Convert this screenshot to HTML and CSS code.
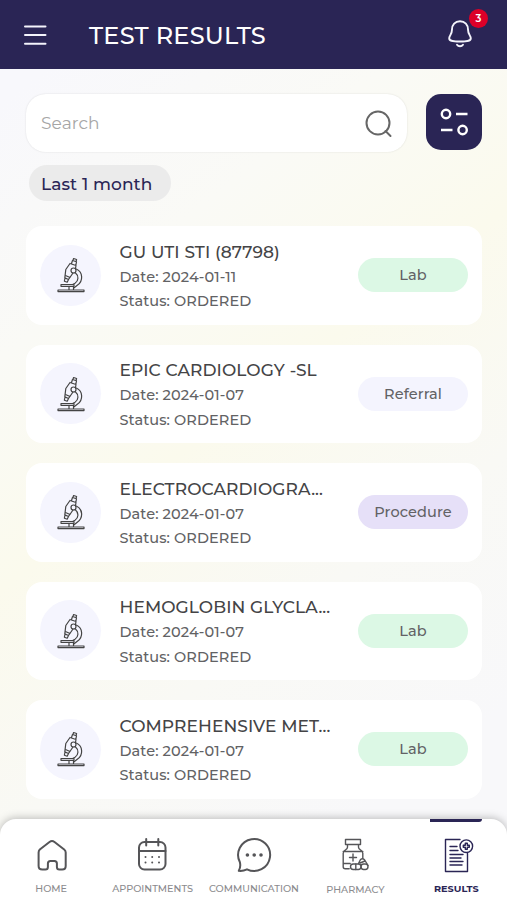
FILE: index.html
```html
<!DOCTYPE html>
<html lang="en">
<head>
    <meta charset="UTF-8">
    <meta name="viewport" content="width=device-width, initial-scale=1.0">
    <title>Test Results</title>
    <link rel="stylesheet" href="styles.css">
</head>
<body>
    <svg class="sprite" aria-hidden="true">
        <symbol id="microscope" viewBox="0 0 28 36">
            <path d="M1 33h26v1.6H1zM4 27.5h13v1.8H4zM12 29.3v3.7M16.500 29.300v3.700"/>
            <path d="M13 6.500l6 2-.5 3M16 16l-4.500 6.500-3.700-1.600 1-8.400 4.200-6M14.500 6.500l1-3 4 1.300-.7 3.500M16 3.300l.6-1.800 3 1-.5 1.800M8.500 18.500l4.500 2M8 21l-.6 3.200 2.800 1 1.300-2.700"/>
            <circle cx="16.500" cy="13.500" r="2.500"/>
            <path d="M19.300 12c6.700 3 7.200 12 1 16.300L16.800 31M18.300 15.800c3.700 3 3.400 8-.3 10.400l-2.300 1.300"/>
        </symbol>
    </svg>

    <header class="header">
        <button class="icon-button" aria-label="Menu">
            <svg width="24" height="24" viewBox="0 0 24 24"><path d="M2 3.500h20.500M2 12h20.500M2 20.700h20.500"/></svg>
        </button>
        <h1>TEST RESULTS</h1>
        <button class="icon-button bell" aria-label="Notifications">
            <svg width="26" height="30" viewBox="0 0 26 30">
                <path d="M13 2.200c-5 0-8 3.600-8 8.200 0 5-2.800 6.300-2.800 8.800 0 2.500 2.500 3.300 10.800 3.300s10.800-.8 10.800-3.300c0-2.500-2.800-3.800-2.800-8.800 0-4.600-3-8.200-8-8.200zM10 25.800c1.400 2 4.600 2 6 0"/>
            </svg>
            <span class="count">3</span>
        </button>
    </header>

    <main class="content">
        <div class="search-row">
            <div class="search-box">
                <span>Search</span>
                <svg width="28" height="28" viewBox="0 0 28 28"><circle cx="13" cy="13" r="11.5"/><path d="M20.5 21l5 5"/></svg>
            </div>
            <button class="filter-button" aria-label="Filter">
                <svg width="28" height="28" viewBox="0 0 28 28"><circle cx="6" cy="6" r="4.2"/><path d="M16 6h11.500M1 22h11.500"/><circle cx="22.6" cy="22" r="4.2"/></svg>
            </button>
        </div>

        <div class="chip">Last 1 month</div>

        <div class="results">
            <div class="card">
                <div class="avatar"><svg width="28" height="36"><use href="#microscope"/></svg></div>
                <div class="info">
                    <h2>GU UTI STI (87798)</h2>
                    <p>Date: 2024-01-11</p>
                    <p>Status: ORDERED</p>
                </div>
                <span class="tag lab">Lab</span>
            </div>
            <div class="card">
                <div class="avatar"><svg width="28" height="36"><use href="#microscope"/></svg></div>
                <div class="info">
                    <h2>EPIC CARDIOLOGY -SL</h2>
                    <p>Date: 2024-01-07</p>
                    <p>Status: ORDERED</p>
                </div>
                <span class="tag referral">Referral</span>
            </div>
            <div class="card">
                <div class="avatar"><svg width="28" height="36"><use href="#microscope"/></svg></div>
                <div class="info">
                    <h2>ELECTROCARDIOGRA...</h2>
                    <p>Date: 2024-01-07</p>
                    <p>Status: ORDERED</p>
                </div>
                <span class="tag procedure">Procedure</span>
            </div>
            <div class="card">
                <div class="avatar"><svg width="28" height="36"><use href="#microscope"/></svg></div>
                <div class="info">
                    <h2>HEMOGLOBIN GLYCLA...</h2>
                    <p>Date: 2024-01-07</p>
                    <p>Status: ORDERED</p>
                </div>
                <span class="tag lab">Lab</span>
            </div>
            <div class="card">
                <div class="avatar"><svg width="28" height="36"><use href="#microscope"/></svg></div>
                <div class="info">
                    <h2>COMPREHENSIVE MET...</h2>
                    <p>Date: 2024-01-07</p>
                    <p>Status: ORDERED</p>
                </div>
                <span class="tag lab">Lab</span>
            </div>
        </div>
    </main>

    <nav class="tabs">
        <a class="tab">
            <svg width="36" height="36" viewBox="0 0 36 36"><path d="M5.800 12.500L15.500 5q2.500-1.800 5 0l9.700 7.500q1.500 1.200 1.500 3V29q0 3.500-3.500 3.500h-2.800q-2.500 0-2.500-2.500v-3.500q0-2.500-2.500-2.500h-4q-2.500 0-2.500 2.500V30q0 2.500-2.500 2.500H8.300Q4.600 32.500 4.600 29V15.500q0-1.800 1.200-3z"/></svg>
            <span>HOME</span>
        </a>
        <a class="tab appointments">
            <svg width="36" height="36" viewBox="0 0 36 36"><rect x="5" y="5" width="26.5" height="27.5" rx="5.5"/><path d="M5 14h26.500M12.200 2v6.500M24.300 2v6.500"/><path class="dots" d="M11.500 20h.01M18.200 20h.01M25 20h.01M11.500 25.500h.01M18.200 25.500h.01M25 25.500h.01"/></svg>
            <span>APPOINTMENTS</span>
        </a>
        <a class="tab communication">
            <svg width="36" height="36" viewBox="0 0 36 36"><path d="M3.900 25.300A16 16 0 1 1 11 32.300Q7 34.300 2.800 33.800q2.200-3.800 1.100-8.500z"/><path class="dots" d="M11.400 18h.01M18.200 18h.01M25 18h.01"/></svg>
            <span>COMMUNICATION</span>
        </a>
        <a class="tab pharmacy">
            <svg width="36" height="36" viewBox="0 0 36 36">
                <path d="M9.500 2.500h15v5h-15zM11.500 7.500v2.800q0 1.500-2 2.500-2.300 1-2.300 3.500v13.500q0 2 2 2h4M22.500 7.500v2.800q0 1.500 2 2.500 2.300 1 2.300 3.500V21M7.200 14.500h19.600M7.200 26.500h7M17 17v7M13.500 20.500h7"/>
                <rect x="14.5" y="27" width="10.5" height="5.5" rx="2.7"/><path d="M19.800 27v5.500M22.500 26.500l2-4q2.200-1.600 4.200.5l3.300 5.500M24 26l5-2"/><rect x="25" y="27" width="7" height="5.5" rx="2.7"/>
            </svg>
            <span>PHARMACY</span>
        </a>
        <a class="tab active">
            <svg width="36" height="36" viewBox="0 0 36 36"><path d="M21 2.500H6.500v32h22V16.500M11 9.500h7M11 13.500h8M11 17.500h13M11 21h11M11 24.500h13M11 28h12"/><circle cx="27.300" cy="9.200" r="6.300"/><path d="M26.300 6.200h2v2h2v2h-2v2h-2v-2h-2v-2h2z"/></svg>
            <span>RESULTS</span>
        </a>
    </nav>
</body>
</html>
```
FILE: styles.css
```css
* {
    box-sizing: border-box;
}

body {
    margin: 0;
    height: 900px;
    display: flex;
    flex-direction: column;
    overflow: hidden;
    font-family: 'Montserrat', 'Inter', sans-serif;
    color: #4a4a4c;
    background: linear-gradient(143deg, #f8f8fc 8%, #fafaf6 28%, #fbfaed 46%, #f9f9f5 65%, #f8f8fa 85%);
}

h1, h2, p {
    margin: 0;
    font-weight: 500;
}

button {
    border: none;
    padding: 0;
    background: none;
}

svg {
    display: block;
    fill: none;
    stroke: currentColor;
    stroke-width: 2;
    stroke-linecap: round;
    stroke-linejoin: round;
}

.sprite {
    display: none;
}

.header {
    height: 69px;
    flex: none;
    display: flex;
    align-items: center;
    padding: 0 34px 0 23px;
    background: #2a2555;
    color: #fff;
}

.header h1 {
    flex: 1;
    margin-left: 42px;
    padding-top: 1px;
    font-size: 24px;
    letter-spacing: 0.25px;
    white-space: nowrap;
}

.icon-button {
    position: relative;
    color: #f4f4fc;
}

.bell svg {
    margin-bottom: 2px;
    stroke-width: 1.9;
}

.count {
    position: absolute;
    top: -10px;
    right: -15px;
    width: 19px;
    height: 19px;
    border-radius: 50%;
    background: #dc0028;
    color: #fff;
    font-family: 'Montserrat', 'Inter', sans-serif;
    font-size: 10px;
    font-weight: 600;
    line-height: 19px;
    text-align: center;
}

.content {
    flex: 1;
    padding: 25px 25px 0 26px;
}

.search-row {
    display: flex;
    align-items: flex-start;
    gap: 19px;
}

.search-box {
    flex: 1;
    height: 58px;
    display: flex;
    align-items: center;
    justify-content: space-between;
    padding: 0 14px 0 15px;
    border-radius: 20px;
    background: #fff;
    box-shadow: 0 0 2px rgba(0, 0, 0, 0.12);
    color: #a6a6a6;
    font-size: 17px;
    letter-spacing: 0.1px;
}

.search-box svg {
    color: #666;
    margin-top: 2px;
}

.filter-button {
    width: 56px;
    height: 56px;
    display: flex;
    align-items: center;
    justify-content: center;
    border-radius: 15px;
    background: #2a2555;
    color: #fff;
}

.filter-button svg {
    stroke-width: 2.4;
    stroke-linecap: butt;
}

.chip {
    width: 142px;
    height: 36px;
    margin: 13px 0 0 3px;
    padding-left: 12px;
    border-radius: 18px;
    background: #ebebeb;
    color: #2a2555;
    font-size: 17px;
    font-weight: 500;
    line-height: 38px;
    letter-spacing: 0.1px;
}

.results {
    display: flex;
    flex-direction: column;
    gap: 20px;
    margin-top: 25px;
}

.card {
    height: 98.5px;
    display: flex;
    align-items: center;
    padding: 0 14px;
    border-radius: 16px;
    background: #fff;
}

.avatar {
    width: 61px;
    height: 61px;
    display: flex;
    align-items: center;
    justify-content: center;
    border-radius: 50%;
    background: #f5f5fe;
    color: #444;
}

.avatar svg {
    stroke-width: 1.2;
}

.info {
    flex: 1;
    margin-left: 18.5px;
    padding-top: 3px;
    font-size: 14.5px;
    line-height: 24.5px;
    letter-spacing: 0.1px;
    white-space: nowrap;
    color: #626264;
}

.info h2 {
    font-size: 17px;
    line-height: 25px;
    color: #444446;
}

.tag {
    width: 110px;
    height: 34px;
    border-radius: 17px;
    color: #626265;
    font-size: 14.5px;
    font-weight: 500;
    line-height: 35px;
    letter-spacing: 0.1px;
    text-align: center;
}

.lab {
    background: #dcf8e5;
}

.referral {
    background: #f4f4fe;
}

.procedure {
    background: #e6e0f8;
}

.tabs {
    height: 81px;
    flex: none;
    display: flex;
    border-radius: 16px 16px 0 0;
    background: #fff;
    box-shadow: 0 -1px 8px rgba(0, 0, 0, 0.25);
}

.tab {
    position: relative;
    flex: 1;
    min-width: 0;
    display: flex;
    flex-direction: column;
    align-items: center;
    padding-top: 18px;
    color: #555558;
}

.tab svg {
    margin-left: 2px;
}

.tab span {
    margin: 9px 0 0 1px;
    font-size: 9.7px;
    font-weight: 500;
    line-height: 13px;
    white-space: nowrap;
    color: #8b8b8e;
}

.appointments svg,
.communication svg {
    margin-left: 0;
}

.communication .dots {
    stroke-width: 3.6;
}

.pharmacy svg,
.active svg {
    stroke-width: 1.4;
}

.pharmacy svg {
    margin-left: -2px;
}

.pharmacy span {
    margin-top: 10px;
}

.tab.active,
.tab.active span {
    color: #2a2555;
}

.tab.active span {
    margin-left: 0;
    font-weight: 700;
}

.active::before {
    content: "";
    position: absolute;
    top: 0;
    left: 24px;
    width: 52px;
    height: 3px;
    border-radius: 0 0 5px 1px;
    background: #2a2555;
}
```
